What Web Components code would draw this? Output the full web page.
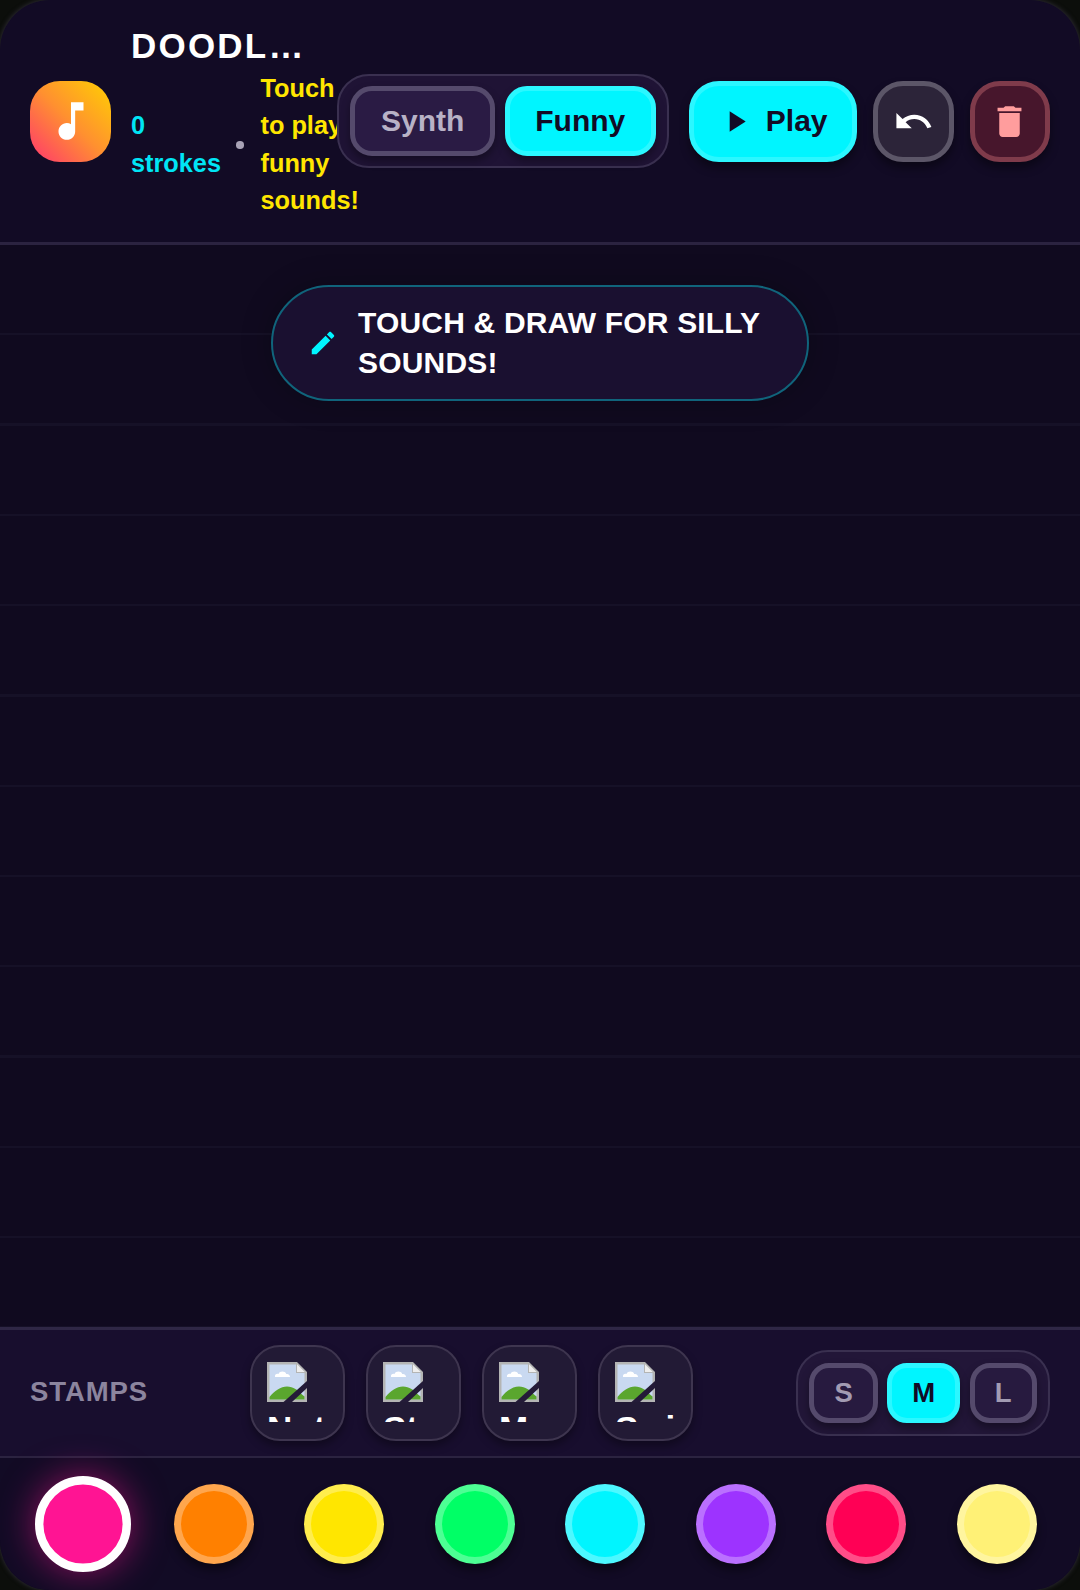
<!DOCTYPE html>
<html>
<head>
<meta charset="utf-8">
<title>Doodle sounds</title>
<style>
  html, body { margin: 0; background: #0c0e0b; }
  body { font-family: "Liberation Sans", Arial, sans-serif; }
</style>
</head>
<body>
<doodle-app>
  <app-header slot="header"></app-header>
  <draw-canvas slot="canvas"></draw-canvas>
  <stamp-bar slot="stamps"></stamp-bar>
  <color-row slot="colors"></color-row>
</doodle-app>

<script>
const ICONS = {
  note: 'M12 3v10.55c-.59-.34-1.27-.55-2-.55-2.21 0-4 1.79-4 4s1.79 4 4 4 4-1.79 4-4V7h4V3h-6z',
  play: 'M8 5v14l11-7z',
  undo: 'M12.5 8c-2.65 0-5.05.99-6.9 2.6L2 7v9h9l-3.62-3.62c1.39-1.16 3.16-1.88 5.12-1.88 3.54 0 6.55 2.31 7.6 5.5l2.37-.78C21.08 11.03 17.15 8 12.5 8z',
  trash: 'M6 19c0 1.1.9 2 2 2h8c1.1 0 2-.9 2-2V7H6v12zM19 4h-3.5l-1-1h-5l-1 1H5v2h14V4z',
  edit: 'M3 17.25V21h3.75L17.81 9.94l-3.75-3.75L3 17.25zM20.71 7.04c.39-.39.39-1.02 0-1.41l-2.34-2.34c-.39-.39-1.02-.39-1.41 0l-1.83 1.83 3.75 3.75 1.83-1.83z'
};
const icon = (name, size, color) =>
  `<svg width="${size}" height="${size}" viewBox="0 0 24 24" fill="${color}" style="display:block;flex:none"><path d="${ICONS[name]}"/></svg>`;

// chrome's broken image glyph, 16 units wide
const BROKEN = `<svg width="40" height="40" viewBox="0 0 16 16" style="display:block">
  <path d="M0 0h12l4 4v12H0z" fill="#b4b5b4"/>
  <path d="M1 1h10.6v3.4H15V15H1z" fill="#c9d9f1"/>
  <path d="M3.2 6c-.2-1 .7-1.5 1.4-1.2.5-1.3 2.6-1.3 3.1 0 .8-.2 1.6.4 1.5 1.2z" fill="#fff"/>
  <path d="M1 15v-1C3 11.5 5.5 9.8 8 9.8c2.5 0 4.5 1.5 6 3.2l1 .8V15z" fill="#5aa62e"/>
  <path d="M12 .9v3.1h3.1z" fill="#eeeeee"/>
  <path d="M6.6 16L16 7.6v2.8L10 16z" fill="#241b38"/>
</svg>`;

class DoodleApp extends HTMLElement {
  constructor() {
    super();
    this.attachShadow({ mode: 'open' }).innerHTML = `
      <style>
        :host {
          display: flex; flex-direction: column;
          height: 1590px; overflow: hidden;
          border-radius: 50px;
          background: #120b25;
          box-shadow: 0 0 4px 1px #2a2830;
        }
        ::slotted([slot=canvas]) { flex: 1; }
      </style>
      <slot name="header"></slot>
      <slot name="canvas"></slot>
      <slot name="stamps"></slot>
      <slot name="colors"></slot>`;
  }
}

class AppHeader extends HTMLElement {
  constructor() {
    super();
    this.attachShadow({ mode: 'open' }).innerHTML = `
      <style>
        :host {
          display: flex; align-items: center; gap: 20px;
          box-sizing: border-box; height: 245px;
          padding: 0 30px;
          border-bottom: 3px solid #2b2340;
          color: #fff;
        }
        .logo {
          flex: none; width: 81px; height: 81px; border-radius: 30px;
          background: linear-gradient(45deg, #ff3d6a 4%, #ff9030 50%, #ffcb05 96%);
          display: flex; align-items: center; justify-content: center;
        }
        .info { flex: 1; min-width: 0; }
        .title {
          font-size: 35px; font-weight: 700; letter-spacing: 2.2px;
          line-height: 46px; white-space: nowrap;
        }
        .meta {
          display: flex; align-items: center; gap: 15px;
          font-size: 25.3px; font-weight: 700; line-height: 37.5px; padding-top: 1px;
        }
        .count { color: #00e5f5; width: 90px; }
        .dot { flex: none; width: 7.5px; height: 7.5px; border-radius: 50%; background: #a8a2b6; margin-top: 1px; }
        .tip { color: #ffe600; width: 90px; flex: none; margin-left: 2px; }
        .tools { display: flex; align-items: center; gap: 16px; }
      </style>
      <div class="logo">${icon('note', 50, '#fff')}</div>
      <div class="info">
        <div class="title">DOODL…</div>
        <div class="meta">
          <span class="count">0 strokes</span>
          <span class="dot"></span>
          <span class="tip">Touch to play funny sounds!</span>
        </div>
      </div>
      <mode-toggle></mode-toggle>
      <div class="tools">
        <tool-btn kind="play">${icon('play', 35, '#120b25')}<span>Play</span></tool-btn>
        <tool-btn kind="undo">${icon('undo', 41, '#fff')}</tool-btn>
        <tool-btn kind="trash">${icon('trash', 41, '#ff9d9d')}</tool-btn>
      </div>`;
  }
}

class ModeToggle extends HTMLElement {
  constructor() {
    super();
    this.attachShadow({ mode: 'open' }).innerHTML = `
      <style>
        :host {
          display: flex; gap: 10px; flex: none; isolation: isolate;
          padding: 10px 11px; border: 2.5px solid #3a3050; border-radius: 32px;
          background: #1f1335;
        }
        button {
          font: 700 30px "Liberation Sans", Arial, sans-serif;
          height: 70px; padding: 0 25.5px; border-radius: 22px;
          border: 5px solid #554a6c; background: #2a1b44; color: #b8b2c6;
          box-shadow: 0 5px 8px rgba(0,0,0,.35);
        }
        button.on { background: #00f5ff; color: #120b25; border-color: #2bf7ff; }
      </style>
      <button>Synth</button>
      <button class="on">Funny</button>`;
  }
}

class ToolBtn extends HTMLElement {
  constructor() {
    super();
    this.attachShadow({ mode: 'open' }).innerHTML = `
      <style>
        :host {
          display: flex; align-items: center; justify-content: center; gap: 12.5px;
          box-sizing: border-box; height: 81px; min-width: 80.5px;
          border-radius: 30px; border: 5px solid #5c5668; background: #2c2439;
          box-shadow: 0 6px 10px rgba(0,0,0,.4);
          font-size: 30px; font-weight: 700;
        }
        :host([kind=play]) {
          padding: 0 24.5px; background: #00f5ff; border-color: #2bf7ff; color: #120b25;
        }
        :host([kind=trash]) { background: #47162c; border-color: #7f3b4b; }
      </style>
      <slot></slot>`;
  }
}

class DrawCanvas extends HTMLElement {
  constructor() {
    super();
    this.attachShadow({ mode: 'open' }).innerHTML = `
      <style>
        :host {
          display: flex; justify-content: center; align-items: flex-start;
          padding-top: 40px;
          background:
            repeating-linear-gradient(to bottom, transparent 0 88px, #161127 88px 90.3px),
            #100a1f;
        }
        .hint {
          display: flex; align-items: center; gap: 20px;
          box-sizing: border-box; width: 538px; height: 115.5px;
          padding: 1px 35px 0;
          border: 2.5px solid #10647b; border-radius: 58px;
          background: #1a1030; color: #fff;
          box-shadow: 0 0 30px rgba(0,0,0,.25);
          font-size: 30px; font-weight: 700; line-height: 40.5px; letter-spacing: .18px;
        }
      </style>
      <div class="hint">${icon('edit', 30, '#00f5ff')}<span>TOUCH &amp; DRAW FOR SILLY SOUNDS!</span></div>`;
  }
}

class StampBar extends HTMLElement {
  constructor() {
    super();
    this.attachShadow({ mode: 'open' }).innerHTML = `
      <style>
        :host {
          display: flex; align-items: center;
          box-sizing: border-box; height: 131px; padding: 0 30px;
          border-top: 3px solid #2f2745; border-bottom: 2.5px solid #2b2340;
          background: #180e2e;
        }
        .label {
          width: 220px; font-size: 27.5px; font-weight: 700; letter-spacing: .9px; color: #8c859e;
          margin-bottom: 3px;
        }
        .stamps { display: flex; gap: 21px; }
        size-picker { margin-left: auto; }
      </style>
      <div class="label">STAMPS</div>
      <div class="stamps">
        <stamp-btn label="Note"></stamp-btn>
        <stamp-btn label="Star"></stamp-btn>
        <stamp-btn label="Moon"></stamp-btn>
        <stamp-btn label="Swirl"></stamp-btn>
      </div>
      <size-picker></size-picker>`;
  }
}

class StampBtn extends HTMLElement {
  constructor() {
    super();
    this.attachShadow({ mode: 'open' }).innerHTML = `
      <style>
        :host {
          display: block; box-sizing: border-box; width: 95px; height: 96px;
          padding: 15px; border: 2.5px solid #3e354f; border-radius: 30px;
          background: #221a35; box-shadow: 0 5px 8px rgba(0,0,0,.35);
        }
        .img { width: 60px; height: 60px; overflow: hidden; }
        .alt {
          margin-top: 7px; color: #fff; font-size: 35px; font-weight: 700;
          line-height: 40px; white-space: nowrap;
        }
      </style>
      <div class="img">${BROKEN}<div class="alt">${this.getAttribute('label')}</div></div>`;
  }
}

class SizePicker extends HTMLElement {
  constructor() {
    super();
    this.attachShadow({ mode: 'open' }).innerHTML = `
      <style>
        :host {
          display: flex; gap: 9.5px; padding: 11px 11.5px;
          border: 2.5px solid #3a3050; border-radius: 32px; background: #221638;
        }
        button {
          font: 700 27.5px "Liberation Sans", Arial, sans-serif;
          height: 60px; padding: 0 20px; border-radius: 20px;
          border: 5px solid #554a6c; background: #271a3f; color: #a29bb2;
          box-shadow: 0 5px 8px rgba(0,0,0,.35);
        }
        button.on { background: #00f5ff; color: #120b25; border-color: #2bf7ff; }
      </style>
      <button>S</button>
      <button class="on">M</button>
      <button>L</button>`;
  }
}

class ColorRow extends HTMLElement {
  constructor() {
    super();
    const colors = ['#ff1493', '#ff8000', '#ffe600', '#00ff66', '#00f5ff', '#9d33ff', '#ff0055', '#fff176'];
    this.attachShadow({ mode: 'open' }).innerHTML = `
      <style>
        :host {
          display: flex; align-items: center; justify-content: space-between;
          box-sizing: border-box; height: 132px; padding: 0 43px; background: #120b25;
        }
      </style>
      ${colors.map((c, i) => `<color-swatch color="${c}" ${i == 0 ? 'selected' : ''}></color-swatch>`).join('')}`;
  }
}

class ColorSwatch extends HTMLElement {
  constructor() {
    super();
    const c = this.getAttribute('color');
    this.attachShadow({ mode: 'open' }).innerHTML = `
      <style>
        :host {
          display: block; box-sizing: border-box; width: 80px; height: 80px;
          border-radius: 50%; border: 7.5px solid rgba(255,255,255,.3);
          background: ${c}; background-clip: border-box;
          box-shadow: 0 6px 10px rgba(0,0,0,.45);
        }
        :host([selected]) {
          transform: scale(1.2); border-color: #fff;
          box-shadow: 0 0 30px ${c}88;
        }
      </style>`;
  }
}

customElements.define('doodle-app', DoodleApp);
customElements.define('app-header', AppHeader);
customElements.define('mode-toggle', ModeToggle);
customElements.define('tool-btn', ToolBtn);
customElements.define('draw-canvas', DrawCanvas);
customElements.define('stamp-bar', StampBar);
customElements.define('stamp-btn', StampBtn);
customElements.define('size-picker', SizePicker);
customElements.define('color-row', ColorRow);
customElements.define('color-swatch', ColorSwatch);
</script>
</body>
</html>
